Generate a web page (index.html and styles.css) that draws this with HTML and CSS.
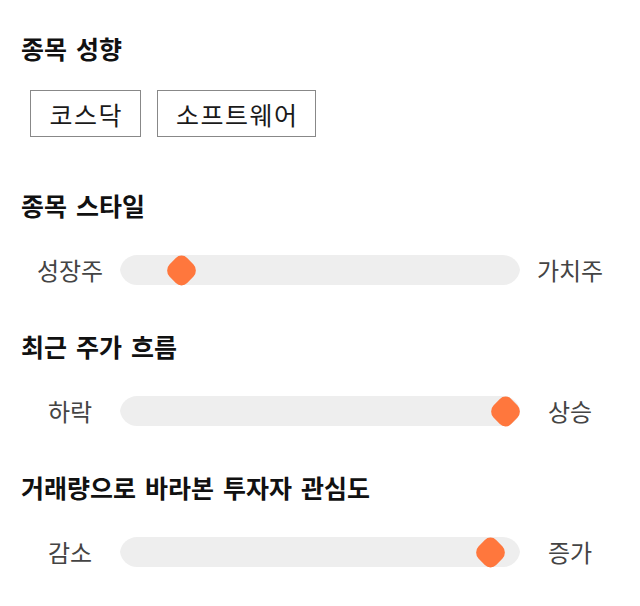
FILE: index.html
```html
<!DOCTYPE html>
<html lang="ko">
<head>
<meta charset="utf-8">
<link rel="stylesheet" href="styles.css">
</head>
<body>
<main class="page">
  <section class="block">
    <h2 class="title">종목 성향</h2>
    <div class="tags">
      <span class="tag">코스닥</span>
      <span class="tag">소프트웨어</span>
    </div>
  </section>
  <section class="block">
    <h2 class="title">종목 스타일</h2>
    <div class="slider">
      <span class="label">성장주</span>
      <div class="track"><span class="thumb" style="left: 61px"></span></div>
      <span class="label">가치주</span>
    </div>
  </section>
  <section class="block">
    <h2 class="title">최근 주가 흐름</h2>
    <div class="slider">
      <span class="label">하락</span>
      <div class="track"><span class="thumb" style="left: 385px"></span></div>
      <span class="label">상승</span>
    </div>
  </section>
  <section class="block">
    <h2 class="title">거래량으로 바라본 투자자 관심도</h2>
    <div class="slider">
      <span class="label">감소</span>
      <div class="track"><span class="thumb" style="left: 370px"></span></div>
      <span class="label">증가</span>
    </div>
  </section>
</main>
</body>
</html>
```
FILE: styles.css
```css
* { box-sizing: border-box; }
html, body { margin: 0; padding: 0; background: #fff; }
body {
  font-family: "Noto Sans CJK KR", "Noto Sans", sans-serif;
  color: #111;
}
.page {
  padding: 32px 20px 0 21px;
  display: flex;
  flex-direction: column;
}
.block { display: flex; flex-direction: column; }
.title {
  margin: 0;
  font-size: 25px;
  font-weight: 700;
  line-height: 32px;
  word-spacing: 2px;
  color: #111;
}
.tags {
  display: flex;
  gap: 16px;
  padding-left: 9px;
  margin-top: 26px;
  margin-bottom: 52px;
}
.tag {
  border: 1px solid #888;
  height: 47px;
  padding: 0 16.5px 0 18.5px;
  display: flex;
  align-items: center;
  font-size: 25px;
  letter-spacing: 1.5px;
  color: #1a1a1a;
}
.slider {
  display: flex;
  align-items: center;
  margin-left: -1px;
  margin-top: 34px;
  margin-bottom: 45px;
}
.label {
  width: 100px;
  text-align: center;
  font-size: 24px;
  color: #444;
  line-height: 30px;
}
.track {
  position: relative;
  width: 400px;
  height: 30px;
}
.track::before {
  content: "";
  position: absolute;
  inset: 0;
  background: #eeeeee;
  clip-path: path("M17,0 H383 A17.5 17.5 0 0 1 400 15 A17.5 17.5 0 0 1 383 30 H17 A17.5 17.5 0 0 1 0 15 A17.5 17.5 0 0 1 17 0 Z");
}
.thumb {
  position: absolute;
  top: 50%;
  width: 25px;
  height: 25px;
  margin-left: -12.5px;
  margin-top: -12.5px;
  background: #ff773d;
  border-radius: 8px;
  transform: scaleY(1.05) rotate(45deg);
}
```
